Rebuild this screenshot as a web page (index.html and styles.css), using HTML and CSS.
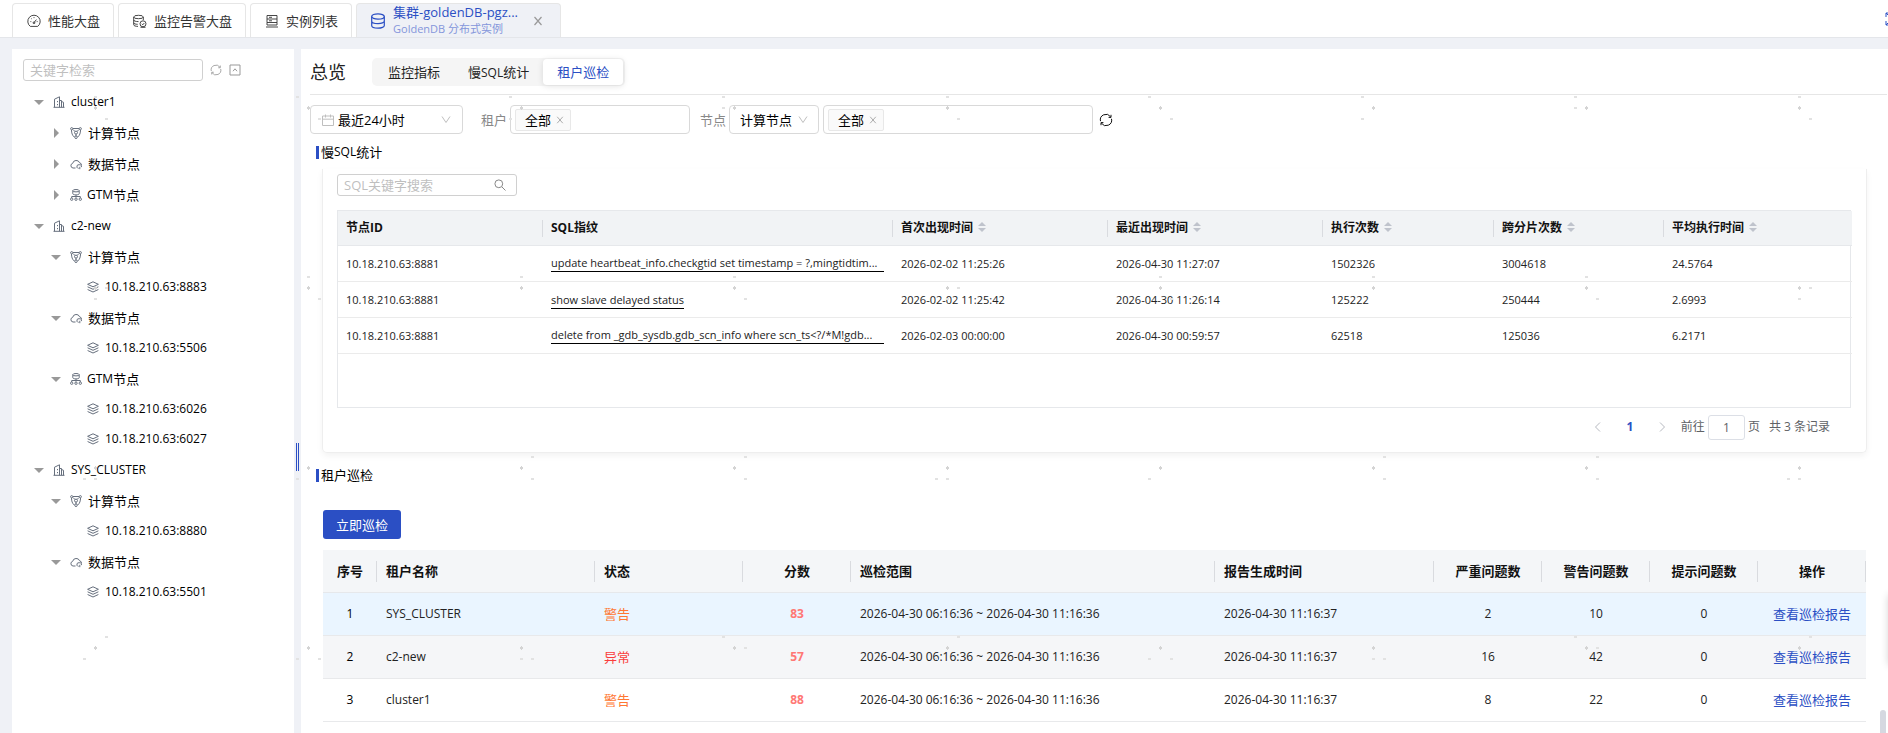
FILE: index.html
```html
<!DOCTYPE html>
<html lang="zh-CN">
<head>
    <meta charset="UTF-8">
    <meta name="viewport" content="width=device-width, initial-scale=1.0">
    <title>集群-goldenDB 租户巡检</title>
    <link rel="stylesheet" href="styles.css">
</head>
<body>
    <!-- shared icons -->
    <svg class="sprite" aria-hidden="true">
        <symbol id="i-gauge" viewBox="0 0 14 14"><path d="M3.3 12.4a6.2 6.2 0 1 1 7.4 0zM7 8.6l2.4-3M3.4 7.6h.9M4.4 4.6l.6.6M7 3.2v.9M10.6 7.6h-.9"/><circle cx="7" cy="8.8" r=".9"/></symbol>
        <symbol id="i-dbalert" viewBox="0 0 14 14"><ellipse cx="5.500" cy="3" rx="4.800" ry="1.700"/><path d="M.7 3v7.800c0 .9 1.800 1.600 4.300 1.600M10.300 3v3M.7 6c0 .9 2 1.600 4.800 1.600M.7 8.800c0 .9 1.800 1.500 4 1.500"/><circle cx="10" cy="9.800" r="3"/><path d="M8.800 9.800l1 1 1.500-1.800M7.500 13.300h5"/></symbol>
        <symbol id="i-server" viewBox="0 0 14 14"><path d="M2 1.500h10v3.500H2zM2 5v3.500h10V5M2 8.500v2.500h10V8.500M1 13h12M4 3.300h3M4 6.800h3"/></symbol>
        <symbol id="i-db" viewBox="0 0 16 16"><ellipse cx="8" cy="3.500" rx="6.300" ry="2.600"/><path d="M1.700 3.500v9c0 1.500 2.800 2.700 6.300 2.700s6.300-1.200 6.300-2.700v-9M1.700 8c0 1.500 2.800 2.600 6.300 2.600s6.300-1.100 6.300-2.600"/></symbol>
        <symbol id="i-close" viewBox="0 0 10 10"><path d="M1.500 1l7 8M8.500 1l-7 8"/></symbol>
        <symbol id="i-refresh" viewBox="0 0 14 14"><path d="M1.500 8.200A5.600 5.600 0 0 1 11.600 3.800M12.500 5.800A5.600 5.600 0 0 1 2.400 10.200M12 1.800v2.600H9.600M2 12.200V9.600h2.400"/></symbol>
        <symbol id="i-collapse" viewBox="0 0 12 12"><path d="M1 1h10v10H1zM4 7.200L6 4.800l2 2.400"/></symbol>
        <symbol id="i-cluster" viewBox="0 0 12 12"><path d="M.5 11.300h11M1.500 11.300V3.200L6.500.8v10.500M6.500 4.500h2v6.800M8.500 5.500l2 .8v5M4.500 5v1.200M4.500 8v1.200"/></symbol>
        <symbol id="i-compute" viewBox="0 0 12 12"><circle cx="1.700" cy="1.700" r="1.100"/><circle cx="10.300" cy="1.700" r="1.100"/><path d="M3 1.500h6M1.500 3c0 3 .8 5.500 2.800 7M10.500 3c0 3-.8 5.500-2.800 7M3 2.500l2 2M9 2.500l-2 2M6 7v2"/><circle cx="6" cy="5.600" r="1.500"/><circle cx="6" cy="10.200" r="1.300"/></symbol>
        <symbol id="i-cloud" viewBox="0 0 12 12"><path d="M5.500 10H3a2.400 2.400 0 0 1-.3-4.700A3.600 3.600 0 0 1 9.600 4.800a2.400 2.400 0 0 1 1.900 2.500M7 7.600c.8-1.200 3.600-1.200 4.400 0M7 7.600v1.800c.4.700 1 .9 1.600.9M11.400 7.600v1.500M9.800 8.800v2.400"/></symbol>
        <symbol id="i-gtm" viewBox="0 0 12 12"><ellipse cx="6" cy="1.700" rx="3.200" ry="1.200"/><path d="M2.800 1.700v3c0 .7 1.400 1.200 3.200 1.200s3.200-.5 3.200-1.200v-3M6 6v2.500M1.700 9V7.500h8.600V9"/><circle cx="1.700" cy="10.200" r="1.200"/><circle cx="6" cy="10.200" r="1.200"/><circle cx="10.300" cy="10.200" r="1.200"/></symbol>
        <symbol id="i-layers" viewBox="0 0 12 12"><path d="M6 .8l5.400 2.500L6 5.800.6 3.300zM.6 5.800L6 8.300l5.400-2.500M.6 8.500L6 11l5.400-2.500"/></symbol>
        <symbol id="i-calendar" viewBox="0 0 12 12"><path d="M.5 2h11v9.500H.5zM.5 5.200h11M3.500.5v3M8.500.5v3"/></symbol>
        <symbol id="i-down" viewBox="0 0 10 10"><path d="M1 1.500l4 6 4-6"/></symbol>
        <symbol id="i-search" viewBox="0 0 12 12"><circle cx="4.800" cy="4.800" r="3.900"/><path d="M7.800 7.800l3.700 3.700"/></symbol>
        <symbol id="i-left" viewBox="0 0 10 10"><path d="M7 .5L2.500 5 7 9.500"/></symbol>
        <symbol id="i-right" viewBox="0 0 10 10"><path d="M3 .5L7.500 5 3 9.500"/></symbol>
        <symbol id="i-expand" viewBox="0 0 14 14"><path d="M1 5V1h4M1 1l4 4M13 5V1H9M13 1L9 5M1 9v4h4M1 13l4-4M13 9v4H9M13 13L9 9"/></symbol>
    </svg>

    <header class="topbar">
        <nav class="tabs">
            <a class="tab" href="#"><svg class="icon icon-14"><use href="#i-gauge"/></svg>性能大盘</a>
            <a class="tab" href="#"><svg class="icon icon-14"><use href="#i-dbalert"/></svg>监控告警大盘</a>
            <a class="tab" href="#"><svg class="icon icon-14"><use href="#i-server"/></svg>实例列表</a>
            <div class="tab active">
                <svg class="icon icon-16"><use href="#i-db"/></svg>
                <div class="tab-text">
                    <span class="tab-name">集群-goldenDB-pgz...</span>
                    <span class="tab-sub">GoldenDB 分布式实例</span>
                </div>
                <button class="icon-btn" aria-label="关闭"><svg class="icon icon-10"><use href="#i-close"/></svg></button>
            </div>
        </nav>
        <button class="icon-btn expand" aria-label="全屏"><svg class="icon icon-14"><use href="#i-expand"/></svg></button>
    </header>

    <div class="layout">
        <aside class="sidebar">
            <div class="side-search">
                <input type="text" class="input" placeholder="关键字检索" aria-label="关键字检索">
                <button class="icon-btn" aria-label="刷新"><svg class="icon icon-12"><use href="#i-refresh"/></svg></button>
                <button class="icon-btn" aria-label="收起"><svg class="icon icon-12"><use href="#i-collapse"/></svg></button>
            </div>
            <ul class="tree">
                <li class="cluster">
                    <div class="row open"><svg class="icon icon-12"><use href="#i-cluster"/></svg>cluster1</div>
                    <ul>
                        <li class="group"><div class="row closed"><svg class="icon icon-12"><use href="#i-compute"/></svg><span class="cn">计算节点</span></div></li>
                        <li class="group"><div class="row closed"><svg class="icon icon-12"><use href="#i-cloud"/></svg><span class="cn">数据节点</span></div></li>
                        <li class="group"><div class="row closed gtm"><svg class="icon icon-12"><use href="#i-gtm"/></svg>GTM<span class="cn">节点</span></div></li>
                    </ul>
                </li>
                <li class="cluster">
                    <div class="row open"><svg class="icon icon-12"><use href="#i-cluster"/></svg>c2-new</div>
                    <ul>
                        <li class="group">
                            <div class="row open"><svg class="icon icon-12"><use href="#i-compute"/></svg><span class="cn">计算节点</span></div>
                            <ul>
                                <li class="row leaf"><svg class="icon icon-12"><use href="#i-layers"/></svg>10.18.210.63:8883</li>
                            </ul>
                        </li>
                        <li class="group">
                            <div class="row open"><svg class="icon icon-12"><use href="#i-cloud"/></svg><span class="cn">数据节点</span></div>
                            <ul>
                                <li class="row leaf"><svg class="icon icon-12"><use href="#i-layers"/></svg>10.18.210.63:5506</li>
                            </ul>
                        </li>
                        <li class="group">
                            <div class="row open gtm"><svg class="icon icon-12"><use href="#i-gtm"/></svg>GTM<span class="cn">节点</span></div>
                            <ul>
                                <li class="row leaf"><svg class="icon icon-12"><use href="#i-layers"/></svg>10.18.210.63:6026</li>
                                <li class="row leaf"><svg class="icon icon-12"><use href="#i-layers"/></svg>10.18.210.63:6027</li>
                            </ul>
                        </li>
                    </ul>
                </li>
                <li class="cluster">
                    <div class="row open"><svg class="icon icon-12"><use href="#i-cluster"/></svg>SYS_CLUSTER</div>
                    <ul>
                        <li class="group">
                            <div class="row open"><svg class="icon icon-12"><use href="#i-compute"/></svg><span class="cn">计算节点</span></div>
                            <ul>
                                <li class="row leaf"><svg class="icon icon-12"><use href="#i-layers"/></svg>10.18.210.63:8880</li>
                            </ul>
                        </li>
                        <li class="group">
                            <div class="row open"><svg class="icon icon-12"><use href="#i-cloud"/></svg><span class="cn">数据节点</span></div>
                            <ul>
                                <li class="row leaf"><svg class="icon icon-12"><use href="#i-layers"/></svg>10.18.210.63:5501</li>
                            </ul>
                        </li>
                    </ul>
                </li>
            </ul>
        </aside>

        <div class="splitter"><span class="grip"></span></div>

        <main class="main">
            <div class="page-head">
                <h1>总览</h1>
                <div class="segment">
                    <button>监控指标</button>
                    <button>慢<span class="en">SQL</span>统计</button>
                    <button class="on">租户巡检</button>
                </div>
            </div>

            <div class="filters">
                <div class="select-box range">
                    <svg class="icon icon-12"><use href="#i-calendar"/></svg>
                    <select aria-label="时间范围"><option>最近24小时</option></select>
                    <svg class="icon icon-10"><use href="#i-down"/></svg>
                </div>
                <span class="label label-tenant">租户</span>
                <div class="tag-box tenant"><span class="tag">全部<button class="icon-btn" aria-label="移除"><svg class="icon icon-8"><use href="#i-close"/></svg></button></span></div>
                <label class="label label-node" for="nodeType">节点</label>
                <div class="select-box node">
                    <select id="nodeType"><option>计算节点</option></select>
                    <svg class="icon icon-10"><use href="#i-down"/></svg>
                </div>
                <div class="tag-box nodes"><span class="tag">全部<button class="icon-btn" aria-label="移除"><svg class="icon icon-8"><use href="#i-close"/></svg></button></span></div>
                <button class="icon-btn reload" aria-label="刷新"><svg class="icon icon-14"><use href="#i-refresh"/></svg></button>
            </div>

            <h2 class="section-title">慢<span class="en">SQL</span>统计</h2>
            <section class="card">
                <div class="search">
                    <input type="text" class="input" placeholder="SQL关键字搜索" aria-label="SQL关键字搜索">
                    <svg class="icon icon-12"><use href="#i-search"/></svg>
                </div>
                <div class="sql-wrap">
                    <table class="sql-table">
                        <colgroup>
                            <col class="w205"><col class="w350"><col class="w215"><col class="w215"><col class="w171"><col class="w170"><col class="w188">
                        </colgroup>
                        <thead>
                            <tr>
                                <th>节点ID</th>
                                <th>SQL指纹</th>
                                <th>首次出现时间<i class="sort"></i></th>
                                <th>最近出现时间<i class="sort"></i></th>
                                <th>执行次数<i class="sort"></i></th>
                                <th>跨分片次数<i class="sort"></i></th>
                                <th>平均执行时间<i class="sort"></i></th>
                            </tr>
                        </thead>
                        <tbody>
                            <tr>
                                <td>10.18.210.63:8881</td>
                                <td><a class="sql full" href="#">update heartbeat_info.checkgtid set timestamp = ?,mingtidtim...</a></td>
                                <td>2026-02-02 11:25:26</td>
                                <td>2026-04-30 11:27:07</td>
                                <td>1502326</td>
                                <td>3004618</td>
                                <td>24.5764</td>
                            </tr>
                            <tr>
                                <td>10.18.210.63:8881</td>
                                <td><a class="sql" href="#">show slave delayed status</a></td>
                                <td>2026-02-02 11:25:42</td>
                                <td>2026-04-30 11:26:14</td>
                                <td>125222</td>
                                <td>250444</td>
                                <td>2.6993</td>
                            </tr>
                            <tr>
                                <td>10.18.210.63:8881</td>
                                <td><a class="sql full" href="#">delete from _gdb_sysdb.gdb_scn_info where scn_ts&lt;?/*M!gdb...</a></td>
                                <td>2026-02-03 00:00:00</td>
                                <td>2026-04-30 00:59:57</td>
                                <td>62518</td>
                                <td>125036</td>
                                <td>6.2171</td>
                            </tr>
                        </tbody>
                    </table>
                </div>
                <div class="pager">
                    <button class="icon-btn" aria-label="上一页"><svg class="icon icon-10"><use href="#i-left"/></svg></button>
                    <span class="page-no">1</span>
                    <button class="icon-btn" aria-label="下一页"><svg class="icon icon-10"><use href="#i-right"/></svg></button>
                    <label class="jump" for="pageNo">前往</label>
                    <input type="text" id="pageNo" value="1">
                    <span>页</span>
                    <span class="total">共 3 条记录</span>
                </div>
            </section>

            <h2 class="section-title second">租户巡检</h2>
            <div class="inspect">
                <button class="primary">立即巡检</button>
                <table class="report">
                    <colgroup>
                        <col class="w54"><col class="w218"><col class="w148"><col class="w108"><col class="w364"><col class="w219"><col class="w108"><col class="w108"><col class="w108"><col class="w108">
                    </colgroup>
                    <thead>
                        <tr>
                            <th class="mid">序号</th>
                            <th>租户名称</th>
                            <th>状态</th>
                            <th class="mid">分数</th>
                            <th>巡检范围</th>
                            <th>报告生成时间</th>
                            <th class="mid">严重问题数</th>
                            <th class="mid">警告问题数</th>
                            <th class="mid">提示问题数</th>
                            <th class="mid">操作</th>
                        </tr>
                    </thead>
                    <tbody>
                        <tr class="hover">
                            <td class="mid no">1</td>
                            <td>SYS_CLUSTER</td>
                            <td class="warn">警告</td>
                            <td class="mid score">83</td>
                            <td>2026-04-30 06:16:36 ~ 2026-04-30 11:16:36</td>
                            <td>2026-04-30 11:16:37</td>
                            <td class="mid">2</td>
                            <td class="mid">10</td>
                            <td class="mid">0</td>
                            <td class="mid"><a class="link" href="#">查看巡检报告</a></td>
                        </tr>
                        <tr class="even">
                            <td class="mid no">2</td>
                            <td>c2-new</td>
                            <td class="error">异常</td>
                            <td class="mid score">57</td>
                            <td>2026-04-30 06:16:36 ~ 2026-04-30 11:16:36</td>
                            <td>2026-04-30 11:16:37</td>
                            <td class="mid">16</td>
                            <td class="mid">42</td>
                            <td class="mid">0</td>
                            <td class="mid"><a class="link" href="#">查看巡检报告</a></td>
                        </tr>
                        <tr>
                            <td class="mid no">3</td>
                            <td>cluster1</td>
                            <td class="warn">警告</td>
                            <td class="mid score">88</td>
                            <td>2026-04-30 06:16:36 ~ 2026-04-30 11:16:36</td>
                            <td>2026-04-30 11:16:37</td>
                            <td class="mid">8</td>
                            <td class="mid">22</td>
                            <td class="mid">0</td>
                            <td class="mid"><a class="link" href="#">查看巡检报告</a></td>
                        </tr>
                    </tbody>
                </table>
            </div>
        </main>
    </div>

    <span class="scroll-thumb"></span>
    <span class="float-panel"></span>

    <!-- dot watermark, tile of 4 x 4 marks -->
    <svg class="watermark" aria-hidden="true">
        <defs>
            <pattern id="dots" width="852" height="720" patternUnits="userSpaceOnUse" x="0" y="0">
                <g class="mark">
                    <path d="M94 107h3v2h-3zM95 106h1v4h-1zM307 107h3v2h-3zM308 106h1v4h-1zM520 107h3v2h-3zM521 106h1v4h-1zM733 107h3v2h-3zM734 106h1v4h-1z"/>
                    <path d="M94 287h3v2h-3zM95 286h1v4h-1zM307 287h3v2h-3zM308 286h1v4h-1zM520 287h3v2h-3zM521 286h1v4h-1zM733 287h3v2h-3zM734 286h1v4h-1z"/>
                    <path d="M94 467h3v2h-3zM95 466h1v4h-1zM307 467h3v2h-3zM308 466h1v4h-1zM520 467h3v2h-3zM521 466h1v4h-1zM733 467h3v2h-3zM734 466h1v4h-1z"/>
                    <path d="M94 647h3v2h-3zM95 646h1v4h-1zM307 647h3v2h-3zM308 646h1v4h-1zM520 647h3v2h-3zM521 646h1v4h-1zM733 647h3v2h-3zM734 646h1v4h-1z"/>
                </g>
                <g class="bit">
                    <path d="M94 96h3v2h-3zM105 118h3v2h-3zM296 96h3v2h-3zM318 118h3v2h-3zM509 96h3v2h-3zM509 118h3v2h-3zM722 96h3v2h-3zM722 107h3v2h-3z"/>
                    <path d="M105 287h3v2h-3zM94 298h3v2h-3zM307 276h3v2h-3zM318 298h3v2h-3zM520 276h3v2h-3zM733 276h3v2h-3zM744 298h3v2h-3z"/>
                    <path d="M83 478h3v2h-3zM94 478h3v2h-3zM296 478h3v2h-3zM531 456h3v2h-3zM531 478h3v2h-3zM744 456h3v2h-3zM744 478h3v2h-3z"/>
                    <path d="M105 636h3v2h-3zM83 658h3v2h-3zM296 658h3v2h-3zM318 658h3v2h-3zM520 658h3v2h-3zM531 658h3v2h-3zM722 636h3v2h-3zM744 647h3v2h-3z"/>
                </g>
            </pattern>
        </defs>
        <rect width="100%" height="100%" fill="url(#dots)"/>
    </svg>
</body>
</html>
```

FILE: styles.css
```css
* {
    box-sizing: border-box;
}
body {
    margin: 0;
    height: 100vh;
    overflow: hidden;
    display: flex;
    flex-direction: column;
    font-family: "Open Sans", "Noto Sans CJK SC", sans-serif;
    font-size: 13px;
    line-height: 20px;
    color: #000;
    background: #eff1f6;
}
button, input, select {
    font: inherit;
    color: inherit;
}
button {
    border: none;
    background: none;
    padding: 0;
    cursor: pointer;
}
a {
    color: inherit;
    text-decoration: none;
}
ul {
    list-style: none;
    margin: 0;
    padding: 0;
}
.sprite {
    display: none;
}
.icon {
    fill: none;
    stroke: currentColor;
    flex: none;
    display: block;
}
.icon-8 { width: 8px; height: 8px; }
.icon-10 { width: 10px; height: 10px; }
.icon-12 { width: 12px; height: 12px; }
.icon-14 { width: 14px; height: 14px; }
.icon-16 { width: 16px; height: 16px; }
.icon-btn {
    display: inline-flex;
    color: #999;
}
.en {
    font-size: 12px;
}

/* top tabs */
.topbar {
    flex: none;
    display: flex;
    justify-content: space-between;
    height: 38px;
    padding: 3px 0 0 12px;
    background: #fff;
    border-bottom: 1px solid #e4e6ea;
    overflow: hidden;
}
.tabs {
    display: flex;
    gap: 4px;
}
.tab {
    display: flex;
    align-items: center;
    gap: 7px;
    padding: 0 13px 0 14px;
    border: 1px solid #e6e6e6;
    border-bottom: none;
    border-radius: 4px 4px 0 0;
    color: #333;
}
.tab .icon {
    stroke-width: 0.9;
}
.tab.active {
    padding: 0 17px 0 13px;
    background: #eff1f6;
    color: #2b4fc4;
}
.tab.active .icon {
    stroke-width: 1.2;
}
.tab-text {
    display: flex;
    flex-direction: column;
    width: 124px;
    margin-right: 9px;
}
.tab-name {
    line-height: 17px;
    white-space: nowrap;
}
.tab-sub {
    font-size: 11px;
    line-height: 16px;
    color: #8496db;
}
.expand {
    color: #2b4fc4;
    margin: 9px -11px 0 0;
}

/* left tree */
.layout {
    flex: 1;
    min-height: 0;
    display: flex;
    padding: 11px 0 0 12px;
}
.sidebar {
    flex: none;
    width: 282px;
    background: #fff;
    padding: 10px 11px;
}
.side-search {
    display: flex;
    align-items: center;
    gap: 7px;
    margin-bottom: 6px;
}
.input {
    width: 180px;
    height: 22px;
    padding: 0 6px;
    border: 1px solid #d0d0d0;
    border-radius: 3px;
    outline: none;
    background: #fff;
}
.input::placeholder {
    color: #bfbfbf;
}
.tree {
    font-size: 12px;
}
.cluster + .cluster, .group {
    margin-top: 1px;
}
.row {
    display: flex;
    align-items: center;
    height: 30px;
    padding-left: 11px;
}
.row .icon {
    margin-right: 6px;
    color: #666f7d;
}
.cn {
    font-size: 13px;
}
.open::before {
    content: "";
    border: 5px solid transparent;
    border-top-color: #999;
    border-bottom: none;
    margin-right: 9px;
}
.closed::before {
    content: "";
    border: 5px solid transparent;
    border-left-color: #999;
    border-right: none;
    margin: 0 11px 0 3px;
}
.group > .row {
    padding-left: 28px;
}
.group > .gtm .icon {
    margin-right: 5px;
}
.leaf {
    padding-left: 64px;
}

.splitter {
    flex: none;
    width: 7px;
    display: flex;
    justify-content: center;
    padding-top: 394px;
}
.grip {
    width: 3px;
    height: 28px;
    border: solid #2b4fc4;
    border-width: 0 1px;
}

/* content */
.main {
    flex: 1;
    min-width: 0;
    background: #fff;
    padding: 9px 1px 0 9px;
}
.page-head {
    display: flex;
    align-items: center;
    gap: 26px;
    height: 37px;
    padding-bottom: 8px;
    border-bottom: 1px solid #e6e6e6;
}
.page-head h1 {
    margin: 0;
    font-size: 18px;
    font-weight: 400;
    color: #222;
}
.segment {
    display: flex;
    padding: 1px 2px;
    background: #f5f5f5;
    border-radius: 5px;
}
.segment button {
    padding: 0 14px;
    height: 26px;
    border-radius: 4px;
    color: #222;
}
.segment .on {
    background: #fff;
    color: #2b4fc4;
    box-shadow: 0 1px 6px rgba(0, 0, 0, 0.12);
}
.filters {
    display: flex;
    align-items: center;
    margin-top: 10px;
}
.select-box, .tag-box {
    display: flex;
    align-items: center;
    height: 29px;
    border: 1px solid #d9d9d9;
    border-radius: 4px;
}
.select-box select {
    flex: 1;
    min-width: 0;
    appearance: none;
    border: none;
    background: none;
    padding: 0;
    outline: none;
}
.select-box .icon {
    color: #bfbfbf;
}
.range {
    width: 153px;
    padding: 0 11px;
    gap: 4px;
}
.node {
    width: 90px;
    padding: 0 10px;
    margin-right: 4px;
}
.label {
    color: #888;
}
.label-tenant {
    margin: 0 3px 0 18px;
}
.label-node {
    margin: 0 3px 0 10px;
}
.tag-box {
    padding-left: 4px;
}
.tenant {
    width: 180px;
}
.nodes {
    width: 270px;
}
.tag {
    display: flex;
    align-items: center;
    gap: 5px;
    height: 22px;
    padding: 0 6px 0 9px;
    background: #fafafa;
    border: 1px solid #e8e8e8;
    border-radius: 2px;
}
.reload {
    margin-left: 6px;
    color: #111;
}
.section-title {
    display: flex;
    align-items: center;
    margin: 8px 0 0 6px;
    font-size: 13px;
    line-height: 20px;
    font-weight: 400;
}
.section-title::before {
    content: "";
    width: 3px;
    height: 13px;
    margin-right: 2px;
    background: #2b4fc4;
}
.card {
    margin: 7px 20px 0 12px;
    padding: 5px 15px 12px 14px;
    border: 1px solid #eee;
    border-top: none;
    border-radius: 0 0 5px 5px;
    box-shadow: 0 3px 6px rgba(0, 0, 0, 0.05);
}
.search {
    display: flex;
    align-items: center;
}
.search .icon {
    margin-left: -23px;
    color: #888;
}
.sql-wrap {
    height: 198px;
    margin-top: 14px;
    border: 1px solid #e6e8eb;
}
table {
    width: 100%;
    table-layout: fixed;
    border-collapse: separate;
    border-spacing: 0;
}
th, td {
    padding: 0 9px;
    text-align: left;
    color: #222;
    white-space: nowrap;
}
th {
    position: relative;
    color: #111;
    font-weight: 700;
}
.mid {
    text-align: center;
}
/* short divider between header cells */
th::after {
    content: "";
    position: absolute;
    right: 0;
    top: 25%;
    width: 1px;
    height: 50%;
    background: #d9dbdf;
}
.w54 { width: 54px; }
.w108 { width: 108px; }
.w148 { width: 148px; }
.w170 { width: 170px; }
.w171 { width: 171px; }
.w188 { width: 188px; }
.w205 { width: 205px; }
.w215 { width: 215px; }
.w218 { width: 218px; }
.w219 { width: 219px; }
.w350 { width: 350px; }
.w364 { width: 364px; }
.sql-table th, .sql-table td {
    padding: 0 9px 0 8px;
}
.sql-table th {
    height: 35px;
    font-size: 12px;
    background: #f1f3f5;
    border-bottom: 1px solid #e6e8eb;
}
.sql-table th:last-child::after {
    display: none;
}
.sql-table td {
    height: 36px;
    font-size: 11px;
    border-bottom: 1px solid #ebebeb;
}
.sql {
    display: inline-block;
    vertical-align: middle;
    line-height: 16px;
    border-bottom: 1px solid #000;
}
.full {
    display: block;
}
.sort {
    display: inline-block;
    margin: 0 0 3px 5px;
    vertical-align: middle;
}
.sort::before, .sort::after {
    content: "";
    display: block;
    border: 4px solid transparent;
}
.sort::before {
    border-bottom-color: #bfc3cc;
    border-top: none;
    margin-bottom: 2px;
}
.sort::after {
    border-top-color: #bfc3cc;
    border-bottom: none;
}
.pager {
    display: flex;
    align-items: center;
    justify-content: flex-end;
    height: 26px;
    margin: 6px 21px 0 0;
    font-size: 12px;
    color: #606266;
}
.pager .icon-btn {
    color: #b5b8bf;
}
.page-no {
    width: 54px;
    text-align: center;
    font-weight: 700;
    color: #2b4fc4;
}
.jump {
    margin: 0 3px 0 14px;
}
.pager input {
    width: 37px;
    height: 25px;
    margin-right: 3px;
    padding: 0;
    text-align: center;
    border: 1px solid #dcdfe6;
    border-radius: 3px;
    outline: none;
}
.total {
    margin-left: 9px;
}
.second {
    margin-top: 12px;
}
.inspect {
    margin: 25px 21px 0 13px;
}
.primary {
    display: block;
    height: 29px;
    padding: 0 13px;
    margin-bottom: 11px;
    background: #2b4fc4;
    color: #fff;
    border-radius: 3px;
}
.report th {
    height: 43px;
    background: #f4f6f8;
    border-bottom: 1px solid #e6e8eb;
}
.report td {
    height: 43px;
    font-size: 12px;
    border-bottom: 1px solid #e8e9eb;
}
.report .no {
    color: #000;
}
.report .hover td {
    background: #eaf5ff;
}
.report .even td {
    background: #f5f6f8;
}
.report .warn {
    font-size: 13px;
    color: #ff7733;
}
.report .error {
    font-size: 13px;
    color: #fa3c3c;
}
.report .score {
    font-weight: 700;
    color: #ff7875;
}
.link {
    font-size: 13px;
    color: #2b4fc4;
}

.scroll-thumb {
    position: absolute;
    right: 2px;
    bottom: 0;
    width: 6px;
    height: 23px;
    border-radius: 3px 3px 0 0;
    background: #d5d8e0;
}
.float-panel {
    position: absolute;
    right: -11px;
    top: 595px;
    width: 10px;
    height: 70px;
    box-shadow: 0 0 8px rgba(0, 0, 0, 0.2);
}
.watermark {
    position: absolute;
    left: 0;
    top: 0;
    width: 100%;
    height: 100%;
    pointer-events: none;
}
.mark {
    fill: #d4d4d4;
}
.bit {
    fill: #e2e2e2;
}
```
